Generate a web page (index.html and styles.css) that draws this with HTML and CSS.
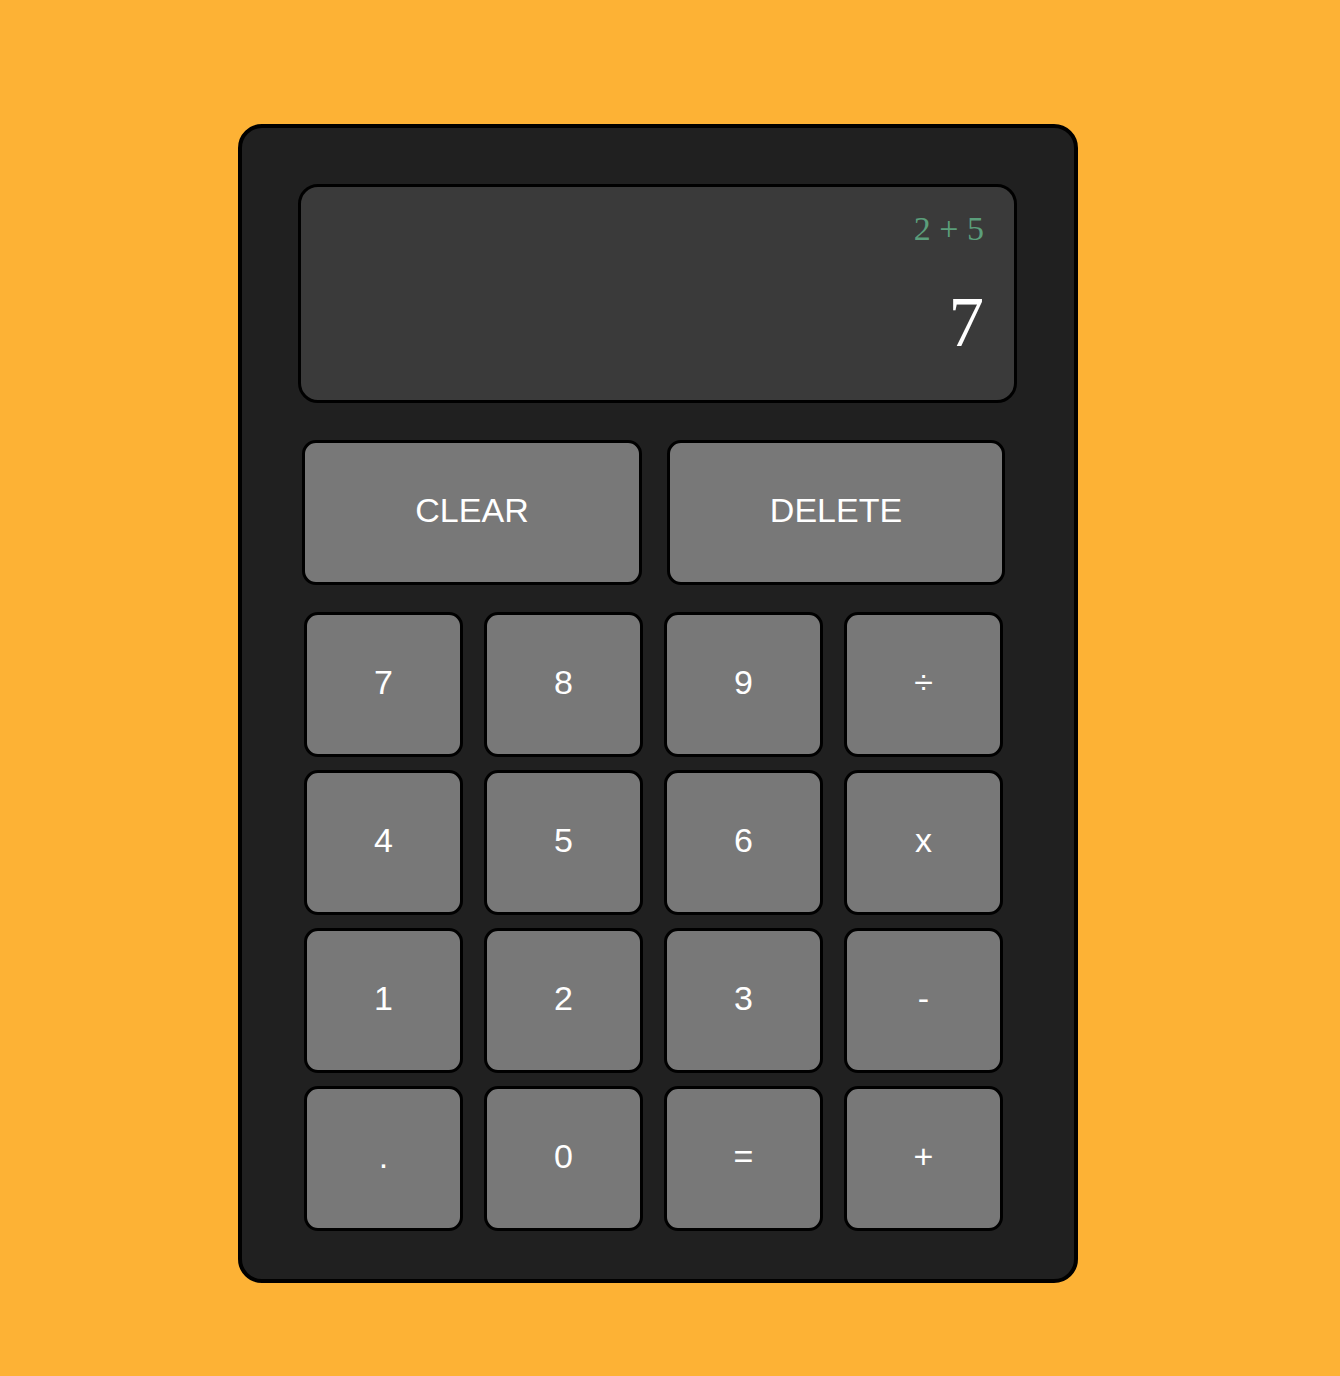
FILE: index.html
```html
<!DOCTYPE html>
<html lang="en">
<head>
<meta charset="utf-8">
<title>Calculator</title>
<link rel="stylesheet" href="styles.css">
</head>
<body>
<div class="calc">
  <div class="display">
    <div class="previous">2 + 5</div>
    <div class="current">7</div>
  </div>
  <div class="top-keys">
    <button class="key">CLEAR</button>
    <button class="key">DELETE</button>
  </div>
  <div class="num-keys">
    <button class="key">7</button>
    <button class="key">8</button>
    <button class="key">9</button>
    <button class="key">÷</button>
    <button class="key">4</button>
    <button class="key">5</button>
    <button class="key">6</button>
    <button class="key">x</button>
    <button class="key">1</button>
    <button class="key">2</button>
    <button class="key">3</button>
    <button class="key">-</button>
    <button class="key">.</button>
    <button class="key">0</button>
    <button class="key">=</button>
    <button class="key">+</button>
  </div>
</div>
</body>
</html>
```

FILE: styles.css
```css
* { box-sizing: border-box; }
html, body { margin: 0; padding: 0; }
body {
  background: #fdb235;
  min-height: 1376px;
  font-family: "Liberation Sans", Arial, sans-serif;
  padding: 124px 0 0 238px;
}
.calc {
  width: 840px;
  height: 1159px;
  background: #202020;
  border: 4px solid #000;
  border-radius: 24px;
  padding: 56px 0 0 56px;
  display: flex;
  flex-direction: column;
}
.display {
  width: 719px;
  height: 219px;
  background: #3a3a3a;
  border: 3px solid #000;
  border-radius: 20px;
  padding: 25px 30px 0 0;
  text-align: right;
  font-family: "Liberation Serif", "Times New Roman", serif;
}
.previous {
  font-size: 34px;
  line-height: 34px;
  color: #5b9e7b;
}
.current {
  margin-top: 41px;
  font-size: 71px;
  line-height: 71px;
  color: #fff;
}
.top-keys {
  margin: 37px 0 0 4px;
  display: grid;
  grid-template-columns: 340px 338px;
  grid-template-rows: 145px;
  column-gap: 25px;
}
.num-keys {
  margin: 27px 0 0 6px;
  display: grid;
  grid-template-columns: repeat(4, 159px);
  grid-auto-rows: 145px;
  column-gap: 21px;
  row-gap: 13px;
}
.key {
  background: #787878;
  border: 3px solid #000;
  border-radius: 14px;
  color: #fff;
  font-family: "Liberation Sans", Arial, sans-serif;
  font-size: 34px;
  padding: 0 0 5px 0;
  margin: 0;
  display: flex;
  align-items: center;
  justify-content: center;
}
```
